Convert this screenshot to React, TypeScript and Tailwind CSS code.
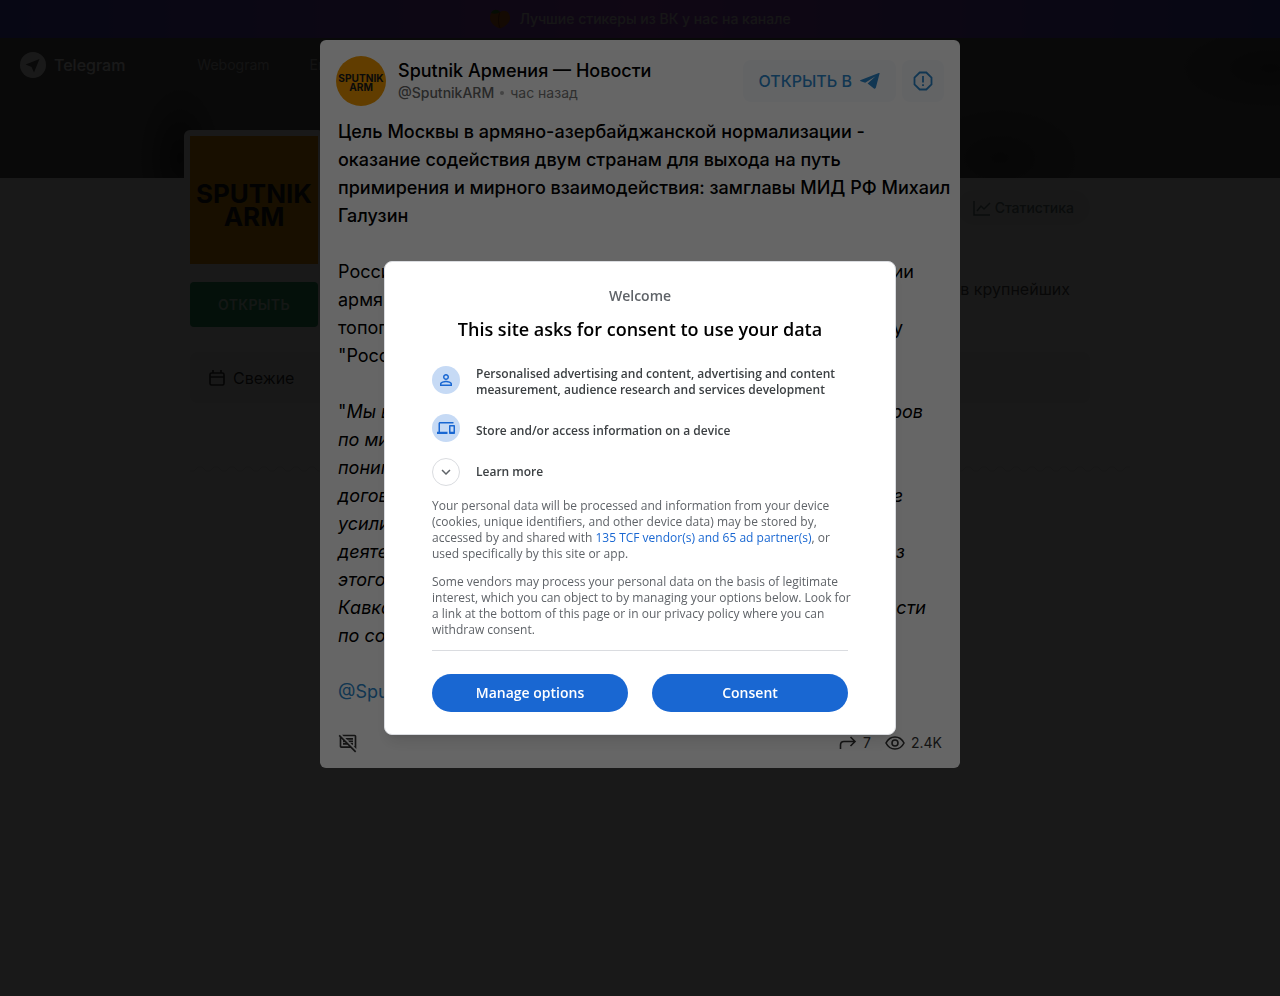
import {
  MdDevices,
  MdExpandMore,
  MdOutlineCommentsDisabled,
  MdPersonOutline,
} from "react-icons/md";

// [start of the line, end of the line, width of the line]
const intro = [
  ["Россия", "миссии", "w-[576px]"],
  ["армян", "", "w-[576px]"],
  ["топогр", "у", "w-[565px]"],
  ['"Росси', "", "w-[565px]"],
];

const quote = [
  ["по мир", "", "w-[585px]"],
  ["поним", "", "w-[585px]"],
  ["догово", "е", "w-[565px]"],
  ["усили", "", "w-[565px]"],
  ["деяте", "из", "w-[567px]"],
  ["этого", "", "w-[565px]"],
  ["Кавка", "области", "w-[588px]"],
  ["по сос", "", "w-[565px]"],
];

function Line({ start, end, width }: any) {
  return (
    <span className={`flex max-w-full justify-between ${width}`}>
      <span>{start}</span>
      <span>{end}</span>
    </span>
  );
}

function Plane({ className }: any) {
  return (
    <svg viewBox="0 0 20 16" className={className} fill="currentColor">
      <path d="M19.6 0.6 C19.8 0.1 19.3 -0.1 18.8 0.1 L0.8 7 C-0.2 7.4 -0.1 8 0.8 8.3 L5.2 9.7 L15.6 3.2 L7.6 10.5 L13.9 15.4 C14.8 15.9 15.6 15.7 15.9 14.6 Z" />
    </svg>
  );
}

function Logo({ className }: any) {
  return (
    <svg
      viewBox="0 0 128 128"
      className={className}
      fontFamily="Inter, sans-serif"
      fontWeight="700"
      fontSize="26"
      textAnchor="middle"
    >
      <rect width="128" height="128" fill="#f29a00" />
      <text x="64" y="67" fill="#1c1c1c">
        SPUTNIK
      </text>
      <text x="64" y="90" fill="#1c1c1c">
        ARM
      </text>
    </svg>
  );
}

function Page() {
  return (
    <div className="min-h-screen bg-white">
      <a
        href="#stickers"
        className="flex h-[38px] items-center justify-center gap-2 bg-linear-to-r from-[#4a4ac8] via-[#a04cd0] to-[#4a4ac8] text-sm font-medium text-[#ddd]"
      >
        <svg viewBox="0 0 22 20" className="h-5 w-[22px]">
          <path
            d="M11 3 C16 0 21 3 21 9 C21 14 16 18 11 19.5 C6 18 1 14 1 9 C1 3 6 0 11 3"
            fill="#c86420"
          />
          <path d="M11 3 C9 8 9 14 11 19" stroke="#8a3a18" fill="none" />
          <path d="M2 4 C4 0 9 0 11 3 C8 5 5 5 2 4" fill="#3a7a28" />
        </svg>
        Лучшие стикеры из ВК у нас на канале
      </a>

      <header className="h-[140px] bg-[#5c5c5c] bg-[radial-gradient(40px_70px_at_180px_120px,#303030_0%,transparent_100%),radial-gradient(80px_50px_at_1000px_120px,#444_0%,transparent_100%),radial-gradient(90px_40px_at_1270px_30px,#444_0%,transparent_100%)]">
        <nav className="flex h-[54px] items-center px-5 text-white">
          <a href="#home" className="flex items-center gap-2 font-medium">
            <svg viewBox="0 0 26 26" className="size-[26px]">
              <circle cx="13" cy="13" r="13" fill="#fff" />
              <path
                d="M19.5 7 L5.5 12.5 L11.5 15 L14 20.5 Z"
                fill="#5c5c5c"
              />
            </svg>
            Telegram
          </a>
          <a href="#webogram" className="ml-[72px] text-sm opacity-60">
            Webogram
          </a>
          <a href="#more" className="ml-10 text-sm opacity-60">
            Ещё
          </a>
        </nav>
      </header>

      <main className="mx-auto -mt-12 max-w-[900px]">
        <div className="flex">
          <div className="w-32 shrink-0">
            <div className="-mx-1.5 rounded-md bg-white p-1.5">
              <Logo className="size-32" />
            </div>
            <button className="mt-3 h-[45px] w-full rounded bg-[#28a064] text-sm font-semibold tracking-wide text-[#c8e8d6]">
              ОТКРЫТЬ
            </button>
          </div>
          <div className="flex grow flex-col items-end pt-15">
            <a
              href="#stats"
              className="flex h-[35px] items-center gap-1 rounded-full bg-[#eef8f6] px-4 text-sm font-medium text-[#66787a]"
            >
              <svg
                viewBox="0 0 18 16"
                className="h-4 w-[18px]"
                fill="none"
                stroke="currentColor"
                strokeWidth="1.5"
              >
                <path d="M1 1 V15 H17 M4 11 L8 6 L11 9 L17 3" />
              </svg>
              Статистика
            </a>
            <p className="mt-[52px] pr-5 leading-6 text-[#555]">
              Новости в крупнейших
            </p>
          </div>
        </div>

        <div className="mt-[25px] flex h-[51px] rounded-lg bg-[#eee] p-[5px]">
          <button className="flex items-center gap-2 rounded-md bg-[#f8f8f8] px-[14px] text-[#333]">
            <svg
              viewBox="0 0 16 16"
              className="size-4"
              fill="none"
              stroke="currentColor"
              strokeWidth="1.6"
            >
              <rect x="1" y="3" width="14" height="12" rx="1.5" />
              <path d="M1 7 H15 M4 0 V3 M12 0 V3" />
            </svg>
            Свежие
          </button>
        </div>
        <svg className="mt-[62px] h-2 w-[940px]">
          <pattern id="wave" width="16" height="8" patternUnits="userSpaceOnUse">
            <path d="M0 6 L4 6 L8 2 L12 2 L16 6" stroke="#eaeaea" fill="none" />
          </pattern>
          <rect width="100%" height="8" fill="url(#wave)" />
        </svg>
      </main>
    </div>
  );
}

function Post() {
  return (
    <article className="w-full max-w-[640px] rounded-md bg-white px-4 pt-4 pb-[15px] text-black">
      <div className="flex items-center">
        <Logo className="size-[50px] rounded-full" />
        <div className="ml-3 grow">
          <h1 className="text-lg leading-6 font-medium">
            Sputnik Армения — Новости
          </h1>
          <p className="flex items-center text-sm leading-5 text-[#777]">
            <a href="#channel" className="font-medium text-[#666]">
              @SputnikARM
            </a>
            <span className="mx-[6px] size-1 rounded-full bg-[#aaa]" />
            час назад
          </p>
        </div>
        <a
          href="#open"
          className="flex h-[42px] items-center gap-2 rounded-lg bg-[#f8fafd] px-4 font-medium text-[#2c87cc]"
        >
          ОТКРЫТЬ В
          <Plane className="h-4 w-5" />
        </a>
        <button
          aria-label="Пожаловаться"
          className="ml-[6px] flex size-[42px] items-center justify-center rounded-lg bg-[#f8fafd] text-[#2c87cc]"
        >
          <svg
            viewBox="0 0 20 20"
            className="size-5"
            fill="none"
            stroke="currentColor"
            strokeWidth="1.8"
          >
            <path d="M6.7 1.5 H13.3 L18.5 6.7 V13.3 L13.3 18.5 H6.7 L1.5 13.3 V6.7 Z M10 5 V11.5 M10 13.2 V15" />
          </svg>
        </button>
      </div>

      <div className="mt-3 px-[2px] text-lg leading-7">
        <h2 className="font-medium">
          Цель Москвы в армяно-азербайджанской нормализации -
          <br />
          оказание содействия двум странам для выхода на путь
          <br />
          <span className="whitespace-nowrap">
            примирения и мирного взаимодействия: замглавы МИД РФ Михаил
          </span>
          <br />
          Галузин
        </h2>
        <p className="mt-7">
          {intro.map(([start, end, width]) => (
            <Line key={start} start={start} end={end} width={width} />
          ))}
        </p>
        <p className="mt-7">
          <span className="flex w-[585px] max-w-full justify-between">
            <span>
              "<em>Мы вы</em>
            </span>
            <em>договоров</em>
          </span>
          <em>
            {quote.map(([start, end, width]) => (
              <Line key={start} start={start} end={end} width={width} />
            ))}
          </em>
        </p>
        <a href="#channel" className="mt-7 block text-[#2c87cc]">
          @SputnikARM
        </a>
      </div>

      <footer className="mt-[27px] flex h-5 items-center px-[2px] text-sm text-[#333]">
        <MdOutlineCommentsDisabled className="size-5" />
        <svg
          viewBox="0 0 18 14"
          className="ml-auto h-[14px] w-[18px]"
          fill="none"
          stroke="currentColor"
          strokeWidth="1.6"
        >
          <path d="M1.5 13 V9 Q1.5 5.5 5 5.5 H16 M11.5 1 L16 5.5 L11.5 10" />
        </svg>
        <span className="ml-[6px]">7</span>
        <svg
          viewBox="0 0 20 14"
          className="ml-[14px] h-[14px] w-5"
          fill="none"
          stroke="currentColor"
          strokeWidth="1.6"
        >
          <path d="M1 7 Q4 1 10 1 T19 7 Q16 13 10 13 T1 7 Z" />
          <circle cx="10" cy="7" r="3" />
        </svg>
        <span className="ml-[6px]">2.4K</span>
      </footer>
    </article>
  );
}

function Consent() {
  return (
    <div
      role="dialog"
      aria-labelledby="consent-title"
      className="w-full max-w-[512px] rounded-lg border border-[#dadce0] bg-white px-[47px] pt-6 pb-[22px] font-['Open_Sans',sans-serif] text-xs leading-4 text-[#5f6368] shadow-lg"
    >
      <p className="text-center text-sm leading-5 font-semibold">Welcome</p>
      <h1
        id="consent-title"
        className="mt-[11px] text-center text-lg leading-6 font-semibold text-black"
      >
        This site asks for consent to use your data
      </h1>

      <ul className="mt-[25px] font-semibold text-[#3c4043]">
        <li className="flex gap-4">
          <span className="flex size-7 shrink-0 items-center justify-center rounded-full bg-[#c6daf5] text-[#1967d2]">
            <MdPersonOutline className="size-[18px]" />
          </span>
          <span>
            Personalised advertising and content, advertising and content
            measurement, audience research and services development
          </span>
        </li>
        <li className="mt-4 flex items-center gap-4">
          <span className="flex size-7 shrink-0 items-center justify-center rounded-full bg-[#c6daf5] text-[#1967d2]">
            <MdDevices className="size-[18px]" />
          </span>
          <span className="pt-[6px]">
            Store and/or access information on a device
          </span>
        </li>
        <li className="mt-4">
          <button className="flex items-center gap-4">
            <span className="flex size-7 items-center justify-center rounded-full border border-[#dadce0] text-[#5f6368]">
              <MdExpandMore className="size-[18px]" />
            </span>
            Learn more
          </button>
        </li>
      </ul>

      <p className="mt-3">
        Your personal data will be processed and information from your device
        (cookies, unique identifiers, and other device data) may be stored by,
        accessed by and shared with{" "}
        <a href="#vendors" className="text-[#1967d2]">
          135 TCF vendor(s) and 65 ad partner(s)
        </a>
        , or used specifically by this site or app.
      </p>
      <p className="-mr-1 mt-3">
        Some vendors may process your personal data on the basis of legitimate
        interest, which you can object to by managing your options below. Look
        for a link at the bottom of this page or in our privacy policy where you
        can withdraw consent.
      </p>

      <div className="mt-3 grid grid-cols-2 gap-6 border-t border-[#dadce0] pt-[23px] text-sm font-semibold text-white">
        <button className="h-[38px] rounded-full bg-[#1967d2]">
          Manage options
        </button>
        <button className="h-[38px] rounded-full bg-[#1967d2]">Consent</button>
      </div>
    </div>
  );
}

function App() {
  return (
    <div className="font-['Inter','Noto_Sans',sans-serif]">
      <Page />
      <div className="fixed inset-0 flex items-start justify-center bg-black/75 pt-10">
        <Post />
      </div>
      <div className="fixed inset-0 flex items-center justify-center bg-black/60">
        <Consent />
      </div>
    </div>
  );
}

export default App;
